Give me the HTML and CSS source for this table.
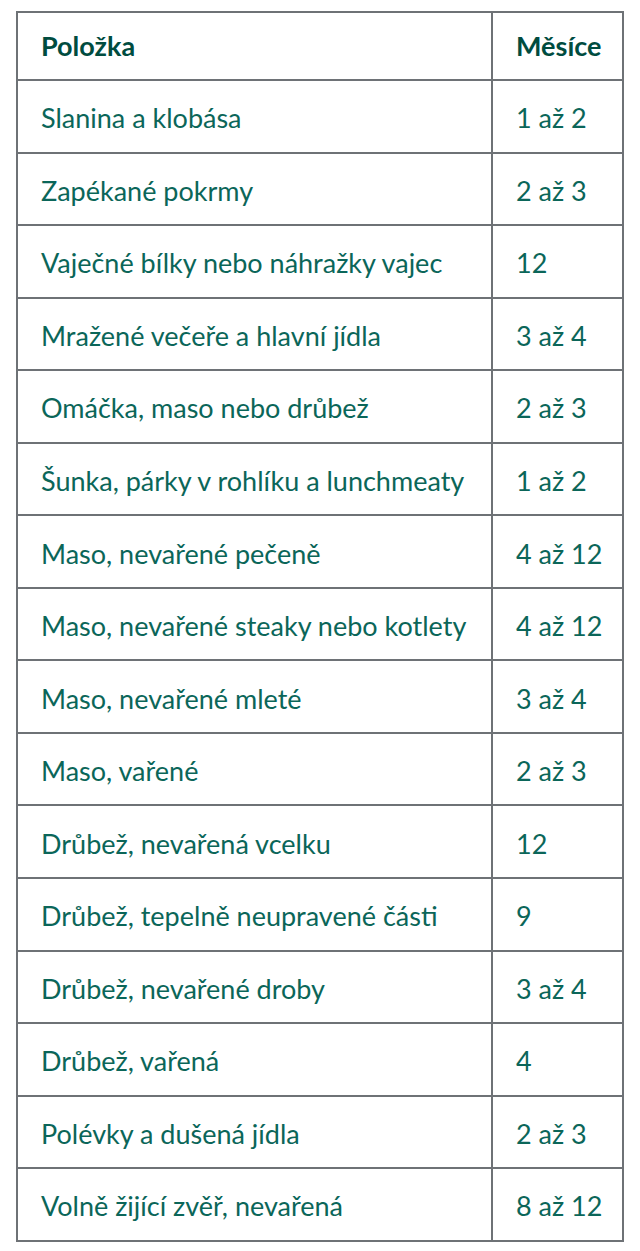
FILE: index.html
```html
<!DOCTYPE html>
<html lang="cs">
<head>
<meta charset="utf-8">
<link rel="stylesheet" href="styles.css">
</head>
<body>
<table class="freeze">
  <thead>
    <tr class="head-row"><th class="col-item">Položka</th><th class="col-months">Měsíce</th></tr>
  </thead>
  <tbody>
    <tr><td>Slanina a klobása</td><td>1 až 2</td></tr>
    <tr><td>Zapékané pokrmy</td><td>2 až 3</td></tr>
    <tr><td>Vaječné bílky nebo náhražky vajec</td><td>12</td></tr>
    <tr><td>Mražené večeře a hlavní jídla</td><td>3 až 4</td></tr>
    <tr><td>Omáčka, maso nebo drůbež</td><td>2 až 3</td></tr>
    <tr><td>Šunka, párky v rohlíku a lunchmeaty</td><td>1 až 2</td></tr>
    <tr><td>Maso, nevařené pečeně</td><td>4 až 12</td></tr>
    <tr><td>Maso, nevařené steaky nebo kotlety</td><td>4 až 12</td></tr>
    <tr><td>Maso, nevařené mleté</td><td>3 až 4</td></tr>
    <tr><td>Maso, vařené</td><td>2 až 3</td></tr>
    <tr><td>Drůbež, nevařená vcelku</td><td>12</td></tr>
    <tr><td>Drůbež, tepelně neupravené části</td><td>9</td></tr>
    <tr><td>Drůbež, nevařené droby</td><td>3 až 4</td></tr>
    <tr><td>Drůbež, vařená</td><td>4</td></tr>
    <tr><td>Polévky a dušená jídla</td><td>2 až 3</td></tr>
    <tr><td>Volně žijící zvěř, nevařená</td><td>8 až 12</td></tr>
  </tbody>
</table>
</body>
</html>
```
FILE: styles.css
```css
html, body {
  margin: 0;
  padding: 0;
  background: #ffffff;
}
body {
  padding: 11px 16px 0 16px;
  font-family: Lato, "Liberation Sans", sans-serif;
}
.freeze {
  border-collapse: collapse;
  width: 608px;
  border: 2px solid #6e7276;
  color: #0b6659;
  font-size: 27px;
}
.freeze th,
.freeze td {
  border: 2px solid #6e7276;
  text-align: left;
  padding: 4px 0 0 23px;
  line-height: 32px;
  height: 72.56px;
  box-sizing: border-box;
}
.freeze th {
  color: #004c3f;
  font-weight: 700;
  height: 68px;
  padding-top: 0;
}
.col-item { width: 475px; }
```
